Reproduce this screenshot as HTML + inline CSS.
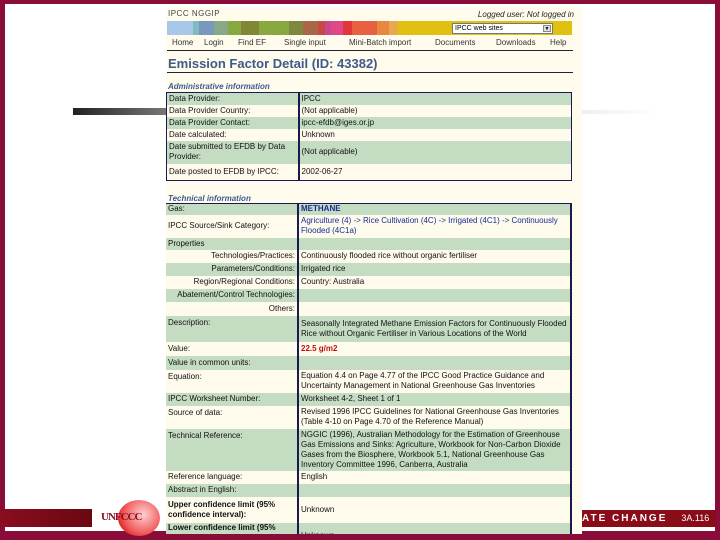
<!DOCTYPE html>
<html><head><meta charset="utf-8"><style>
*{margin:0;padding:0;box-sizing:border-box}
body{width:720px;height:540px;background:#8a0c38;position:relative;overflow:hidden;font-family:"Liberation Sans",sans-serif}
#slide{position:absolute;left:5px;top:4px;width:710px;height:527px;background:#fff}
#shot{position:absolute;left:166px;top:7px;width:416px;height:527px;background:#fffcee;overflow:hidden}
.a{position:absolute}
.cb{position:absolute;top:14px;height:14px}
table{border-collapse:collapse;position:absolute;left:0;width:406px;font-size:8px;color:#111}
td{padding:0 2px;vertical-align:middle;line-height:10px}
td.l{width:132px;border-right:2px solid #1a1a50}
tr.g td{background:#c4dcc2}
tr.w td{background:#fffbec}
.r{text-align:right}
.b{color:#1a2a9a}
.sec{position:absolute;left:2px;font-size:8px;font-style:italic;font-weight:bold;color:#3a5a90}
</style></head><body>
<div id="slide"></div>
<div class="a" style="left:73px;top:108px;width:93px;height:7px;background:linear-gradient(90deg,#222,#777)"></div>
<div class="a" style="left:582px;top:110px;width:75px;height:4px;background:linear-gradient(90deg,#eee,#fff)"></div>
<div class="a" style="left:0;top:509px;width:92px;height:18px;background:linear-gradient(90deg,#8a0c20,#6a0810)"></div>
<div class="a" style="left:118px;top:500px;width:42px;height:36px;border-radius:50%;background:radial-gradient(circle at 60% 40%,#ffd0d0,#f06060 55%,#e02020 80%)"></div>
<div class="a" style="left:101px;top:511px;font:bold 11px 'Liberation Serif',serif;color:#8a0c20;letter-spacing:-1px">UNFCCC</div>
<div class="a" style="left:582px;top:510px;width:134px;height:17px;background:#8a0c18;color:#fff;font-size:10px;line-height:17px"><b style="letter-spacing:2px">ATE CHANGE</b><span style="margin-left:14px;font-size:9px">3A.116</span></div>
<div id="shot">
 <div class="a" style="left:2px;top:2px;font-size:8px;color:#444;letter-spacing:.5px">IPCC NGGIP</div>
 <div class="a" style="right:8px;top:3px;font-size:8px;font-style:italic;color:#222">Logged user: Not logged in</div>
 <div class="cb" style="left:1px;width:26px;background:#a8c8e8"></div>
 <div class="cb" style="left:27px;width:6px;background:#80bcc0"></div>
 <div class="cb" style="left:33px;width:15px;background:#7898c0"></div>
 <div class="cb" style="left:48px;width:14px;background:#88a888"></div>
 <div class="cb" style="left:62px;width:13px;background:#88a840"></div>
 <div class="cb" style="left:75px;width:18px;background:#808838"></div>
 <div class="cb" style="left:93px;width:30px;background:#88a840"></div>
 <div class="cb" style="left:123px;width:14px;background:#808840"></div>
 <div class="cb" style="left:137px;width:15px;background:#a86848"></div>
 <div class="cb" style="left:152px;width:7px;background:#c84848"></div>
 <div class="cb" style="left:159px;width:6px;background:#c84890"></div>
 <div class="cb" style="left:165px;width:12px;background:#e04888"></div>
 <div class="cb" style="left:177px;width:9px;background:#e03838"></div>
 <div class="cb" style="left:186px;width:25px;background:#e86040"></div>
 <div class="cb" style="left:211px;width:12px;background:#e88840"></div>
 <div class="cb" style="left:223px;width:9px;background:#e8a850"></div>
 <div class="cb" style="left:232px;width:174px;background:#e0c010"></div>
 <div class="a" style="left:286px;top:16px;width:101px;height:11px;background:#fff;border:1px solid #777;font-size:7px;line-height:9px;padding-left:2px">IPCC web sites<span style="position:absolute;right:1px;top:1px;width:8px;height:7px;border:1px solid #888;background:#ddd;font-size:5px;line-height:6px;text-align:center">▼</span></div>
 <div class="a" style="left:0;top:31px;width:406px;font-size:8px;color:#333">
  <span class="a" style="left:6px">Home</span><span class="a" style="left:38px">Login</span><span class="a" style="left:72px">Find EF</span><span class="a" style="left:118px">Single input</span><span class="a" style="left:183px">Mini-Batch import</span><span class="a" style="left:269px">Documents</span><span class="a" style="left:330px">Downloads</span><span class="a" style="left:384px">Help</span>
 </div>
 <div class="a" style="left:1px;top:43px;width:406px;height:1px;background:#223"></div>
 <div class="a" style="left:2px;top:49px;font-size:13px;font-weight:bold;color:#3d5a8a">Emission Factor Detail (ID: 43382)</div>
 <div class="a" style="left:1px;top:65px;width:406px;height:1px;background:#223"></div>
 <div class="sec" style="top:75px">Administrative information</div>
 <table style="top:85px;border:1px solid #1a1a50">
  <tr class="g" style="height:12px"><td class="l">Data Provider:</td><td>IPCC</td></tr>
  <tr class="w" style="height:12px"><td class="l">Data Provider Country:</td><td>(Not applicable)</td></tr>
  <tr class="g" style="height:12px"><td class="l">Data Provider Contact:</td><td>ipcc-efdb@iges.or.jp</td></tr>
  <tr class="w" style="height:12px"><td class="l">Date calculated:</td><td>Unknown</td></tr>
  <tr class="g" style="height:23px"><td class="l">Date submitted to EFDB by Data Provider:</td><td>(Not applicable)</td></tr>
  <tr class="w" style="height:17px"><td class="l">Date posted to EFDB by IPCC:</td><td>2002-06-27</td></tr>
 </table>
 <div class="sec" style="top:187px">Technical information</div>
 <table style="top:196px;border-top:1px solid #1a1a50;border-right:2px solid #1a1a50">
  <tr class="g" style="height:11px"><td class="l">Gas:</td><td class="b"><b>METHANE</b></td></tr>
  <tr class="w" style="height:23px"><td class="l">IPCC Source/Sink Category:</td><td class="b">Agriculture (4) -&gt; Rice Cultivation (4C) -&gt; Irrigated (4C1) -&gt; Continuously Flooded (4C1a)</td></tr>
  <tr class="g" style="height:12px"><td class="l">Properties</td><td></td></tr>
  <tr class="w" style="height:13px"><td class="l r">Technologies/Practices:</td><td>Continuously flooded rice without organic fertiliser</td></tr>
  <tr class="g" style="height:13px"><td class="l r">Parameters/Conditions:</td><td>Irrigated rice</td></tr>
  <tr class="w" style="height:13px"><td class="l r">Region/Regional Conditions:</td><td>Country: Australia</td></tr>
  <tr class="g" style="height:13px"><td class="l r">Abatement/Control Technologies:</td><td></td></tr>
  <tr class="w" style="height:14px"><td class="l r">Others:</td><td></td></tr>
  <tr class="g" style="height:26px"><td class="l" style="vertical-align:top;padding-top:2px">Description:</td><td>Seasonally Integrated Methane Emission Factors for Continuously Flooded Rice without Organic Fertiliser in Various Locations of the World</td></tr>
  <tr class="w" style="height:14px"><td class="l">Value:</td><td style="color:#c01010"><b>22.5 g/m2</b></td></tr>
  <tr class="g" style="height:14px"><td class="l">Value in common units:</td><td></td></tr>
  <tr class="w" style="height:23px"><td class="l" style="vertical-align:top;padding-top:2px">Equation:</td><td>Equation 4.4 on Page 4.77 of the IPCC Good Practice Guidance and Uncertainty Management in National Greenhouse Gas Inventories</td></tr>
  <tr class="g" style="height:13px"><td class="l">IPCC Worksheet Number:</td><td>Worksheet 4-2, Sheet 1 of 1</td></tr>
  <tr class="w" style="height:23px"><td class="l" style="vertical-align:top;padding-top:2px">Source of data:</td><td>Revised 1996 IPCC Guidelines for National Greenhouse Gas Inventories (Table 4-10 on Page 4.70 of the Reference Manual)</td></tr>
  <tr class="g" style="height:42px"><td class="l" style="vertical-align:top;padding-top:2px">Technical Reference:</td><td>NGGIC (1996), Australian Methodology for the Estimation of Greenhouse Gas Emissions and Sinks: Agriculture, Workbook for Non-Carbon Dioxide Gases from the Biosphere, Workbook 5.1, National Greenhouse Gas Inventory Committee 1996, Canberra, Australia</td></tr>
  <tr class="w" style="height:13px"><td class="l">Reference language:</td><td>English</td></tr>
  <tr class="g" style="height:13px"><td class="l">Abstract in English:</td><td></td></tr>
  <tr class="w" style="height:26px"><td class="l"><b>Upper confidence limit (95% confidence interval):</b></td><td>Unknown</td></tr>
  <tr class="g" style="height:26px"><td class="l" style="vertical-align:top"><b>Lower confidence limit (95%</b></td><td>Unknown</td></tr>
 </table>
</div>
</body></html>
